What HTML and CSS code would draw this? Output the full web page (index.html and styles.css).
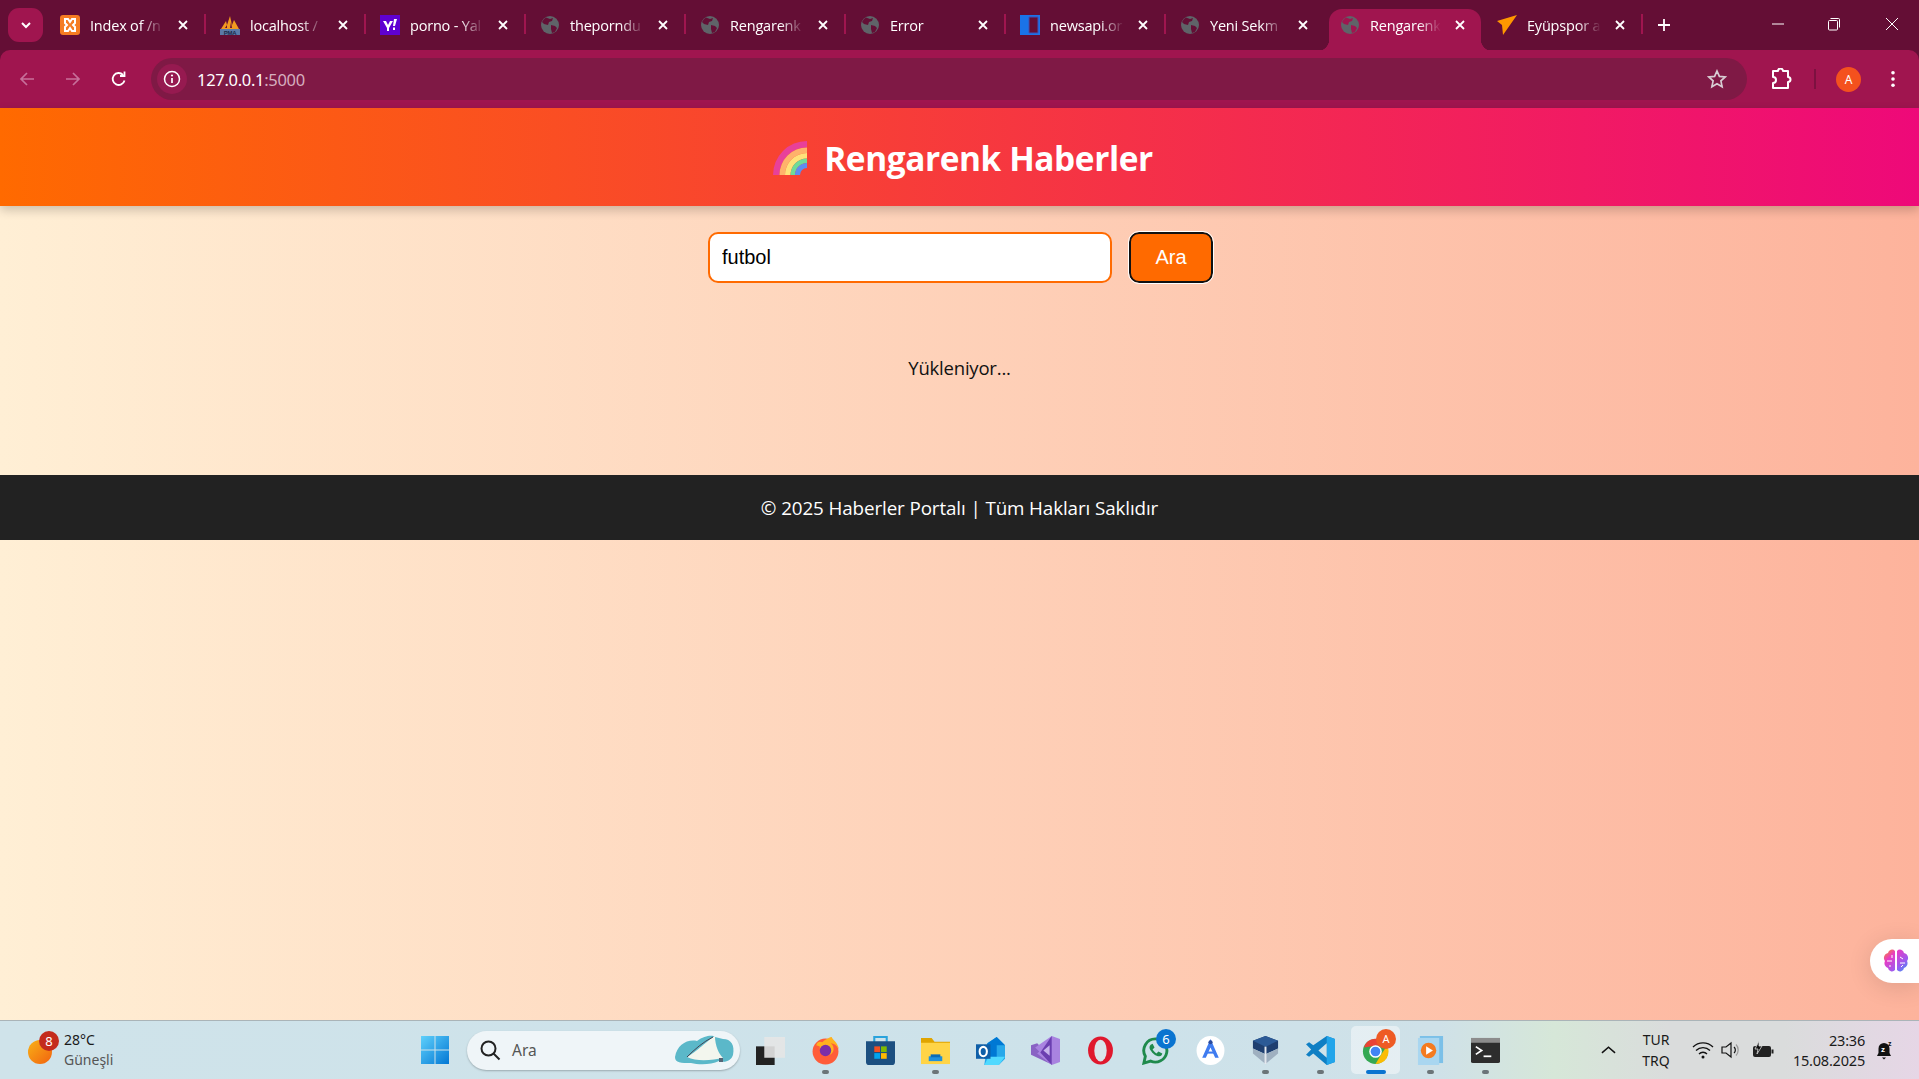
FILE: index.html
```html
<!DOCTYPE html>
<html lang="tr">
<head>
<meta charset="utf-8">
<title>Rengarenk Haberler</title>
<link rel="stylesheet" href="styles.css">
</head>
<body>
<svg class="defs" width="0" height="0" aria-hidden="true">
  <symbol id="globe" viewBox="0 0 20 20">
    <circle cx="10" cy="10" r="9" fill="#5f6368"/>
    <path d="M6 2.5l4 1.5 3-1-1 3-3 1-1 3-4-1-2-2 2-3zM11 10l4 1 2 2-2 4-3 1-1-4z" fill="#640e35"/>
  </symbol>
  <symbol id="close" viewBox="0 0 12 12">
    <path d="M2 2l8 8M10 2l-8 8" stroke="#fff" stroke-width="1.8" fill="none"/>
  </symbol>
</svg>

<header class="tabstrip">
  <button class="tab-menu"><svg width="14" height="14" viewBox="0 0 14 14"><path d="M3 5l4 4 4-4" stroke="#fff" stroke-width="2" fill="none"/></svg></button>
  <div class="tab">
    <svg class="fav" viewBox="0 0 20 20"><rect width="20" height="20" rx="3" fill="#f57c22"/><path d="M5 4h3l2 3 2-3h3v4l-2 2 2 2v4h-3l-2-3-2 3H5v-4l2-2-2-2z" fill="none" stroke="#fff" stroke-width="2"/></svg>
    <span class="tab-title">Index of /n</span>
    <svg class="tab-close"><use href="#close"/></svg>
  </div>
  <i class="tab-sep"></i>
  <div class="tab">
    <svg class="fav" viewBox="0 0 20 20"><path d="M1 14L6 6l1 4 3-9 2 9 2-5 5 9z" fill="#f29a1f"/><path d="M5 13l2-3v3zM10 13l1-6 1 6z" fill="#640e35"/><rect x="0" y="14" width="20" height="6" fill="#5b7aa8"/><text x="10" y="19.5" class="pma">PMA</text></svg>
    <span class="tab-title">localhost /</span>
    <svg class="tab-close"><use href="#close"/></svg>
  </div>
  <i class="tab-sep"></i>
  <div class="tab">
    <svg class="fav" viewBox="0 0 20 20"><rect width="20" height="20" fill="#5f01d1"/><path d="M3 6h3l2 4 2-4h3l-4 7v3H7v-3z" fill="#fff"/><path d="M14 4h3l-2 7h-2zM13 12.5h2V15h-2z" fill="#fff"/></svg>
    <span class="tab-title">porno - Yal</span>
    <svg class="tab-close"><use href="#close"/></svg>
  </div>
  <i class="tab-sep"></i>
  <div class="tab">
    <svg class="fav"><use href="#globe"/></svg>
    <span class="tab-title">theporndu</span>
    <svg class="tab-close"><use href="#close"/></svg>
  </div>
  <i class="tab-sep"></i>
  <div class="tab">
    <svg class="fav"><use href="#globe"/></svg>
    <span class="tab-title">Rengarenk</span>
    <svg class="tab-close"><use href="#close"/></svg>
  </div>
  <i class="tab-sep"></i>
  <div class="tab">
    <svg class="fav"><use href="#globe"/></svg>
    <span class="tab-title tab-title-plain">Error</span>
    <svg class="tab-close"><use href="#close"/></svg>
  </div>
  <i class="tab-sep"></i>
  <div class="tab">
    <svg class="fav" viewBox="0 0 20 20"><rect width="20" height="20" fill="#1a73e8"/><rect x="9" y="2" width="9" height="16" fill="#640e35"/><path d="M9 2h9v16H9z" fill="none" stroke="#3f51b5"/></svg>
    <span class="tab-title">newsapi.or</span>
    <svg class="tab-close"><use href="#close"/></svg>
  </div>
  <i class="tab-sep"></i>
  <div class="tab">
    <svg class="fav"><use href="#globe"/></svg>
    <span class="tab-title">Yeni Sekm</span>
    <svg class="tab-close"><use href="#close"/></svg>
  </div>
  <i class="tab-sep tab-sep-off"></i>
  <div class="tab tab-active">
    <svg class="fav" viewBox="0 0 20 20"><circle cx="10" cy="10" r="9" fill="#5f6368"/><path d="M6 2.5l4 1.5 3-1-1 3-3 1-1 3-4-1-2-2 2-3zM11 10l4 1 2 2-2 4-3 1-1-4z" fill="#a0154f"/></svg>
    <span class="tab-title">Rengarenk</span>
    <svg class="tab-close"><use href="#close"/></svg>
  </div>
  <i class="tab-sep tab-sep-off tab-sep-narrow"></i>
  <div class="tab">
    <svg class="fav" viewBox="0 0 20 20"><path d="M0 6L20 0 6 20 5 10z" fill="#ff9800"/></svg>
    <span class="tab-title">Eyüpspor a</span>
    <svg class="tab-close"><use href="#close"/></svg>
  </div>
  <i class="tab-sep"></i>
  <svg class="new-tab" viewBox="0 0 14 14"><path d="M7 1v12M1 7h12" stroke="#fff" stroke-width="1.8"/></svg>
  <div class="win-controls">
    <svg class="win-btn" viewBox="0 0 14 14"><path d="M1 7h12" stroke="#fff"/></svg>
    <svg class="win-btn" viewBox="0 0 14 14"><path d="M1.5 4.5a1 1 0 0 1 1-1h7a1 1 0 0 1 1 1v7.500a1 1 0 0 1-1 1h-7a1 1 0 0 1-1-1zM3.500 1.500h8a1 1 0 0 1 1 1v8" stroke="#fff" fill="none"/></svg>
    <svg class="win-btn win-btn-close" viewBox="0 0 14 14"><path d="M1 1l12 12M13 1L1 13" stroke="#fff"/></svg>
  </div>
</header>

<nav class="toolbar">
  <svg class="tool-icon" viewBox="0 0 18 18"><path d="M16 9H3M9 3L3 9l6 6" stroke="#c7709a" stroke-width="1.7" fill="none"/></svg>
  <svg class="tool-icon" viewBox="0 0 18 18"><path d="M2 9h13M9 3l6 6-6 6" stroke="#c7709a" stroke-width="1.7" fill="none"/></svg>
  <svg class="tool-icon" viewBox="0 0 18 18"><path d="M14.500 10.500A6 6 0 1 1 13 4.800M14.500 1.500v4.500H10" stroke="#fff" stroke-width="1.800" fill="none"/></svg>
  <div class="omnibox">
    <span class="info-chip"><svg width="18" height="18" viewBox="0 0 18 18"><circle cx="9" cy="9" r="7.500" stroke="#fff" stroke-width="1.500" fill="none"/><path d="M9 8v5" stroke="#fff" stroke-width="1.700"/><circle cx="9" cy="5.500" r="1.100" fill="#fff"/></svg></span>
    <span class="url">127.0.0.1<span class="url-dim">:5000</span></span>
    <svg class="star" viewBox="0 0 20 20"><path d="M10 2l2.400 5.400 5.800.6-4.300 3.900 1.200 5.800L10 14.700l-5.100 3 1.200-5.800L1.800 8l5.800-.6z" stroke="#d8cdd3" stroke-width="1.700" fill="none"/></svg>
  </div>
  <svg class="ext" viewBox="0 0 22 22"><path d="M3 3h5a2.500 2.500 0 0 1 5 0h5v6a2.500 2.500 0 0 1 0 5v6H3v-5a3 3 0 0 0 0-6z" stroke="#fff" stroke-width="2" fill="none" stroke-linejoin="round"/></svg>
  <i class="tool-sep"></i>
  <span class="avatar">A</span>
  <svg class="dots" viewBox="0 0 6 20"><circle cx="3" cy="3" r="2" fill="#fff"/><circle cx="3" cy="10" r="2" fill="#fff"/><circle cx="3" cy="17" r="2" fill="#fff"/></svg>
</nav>

<main class="viewport">
  <div class="site-head">
    <h1 class="site-title"><svg class="rainbow" viewBox="0 0 34 34"><path d="M0 34A34 34 0 0 1 34 0v6.500A27.500 27.500 0 0 0 6.500 34z" fill="#e8409a"/><path d="M6.500 34A27.500 27.500 0 0 1 34 6.500V12A22 22 0 0 0 12 34z" fill="#ffb26b"/><path d="M12 34A22 22 0 0 1 34 12v5.500A16.500 16.500 0 0 0 17.500 34z" fill="#ffe27a"/><path d="M17.500 34A16.500 16.500 0 0 1 34 17.500V22A12 12 0 0 0 22 34z" fill="#6fdc98"/><path d="M22 34A12 12 0 0 1 34 22v5A7 7 0 0 0 27 34z" fill="#5f8df0"/></svg><span>Rengarenk Haberler</span></h1>
  </div>
  <form class="search-row">
    <input class="search-input" type="text" value="futbol">
    <button class="search-btn" type="button">Ara</button>
  </form>
  <p class="loading">Yükleniyor...</p>
  <footer class="site-foot">© 2025 Haberler Portalı | Tüm Hakları Saklıdır</footer>
  <div class="brain-widget">
    <svg width="26" height="24" viewBox="0 0 26 24"><defs><linearGradient id="bg" x1="0" y1="0" x2="1" y2="1"><stop offset="0" stop-color="#f7931e"/><stop offset=".3" stop-color="#e83bc4"/><stop offset=".7" stop-color="#9b5cf0"/><stop offset="1" stop-color="#2f9bf0"/></linearGradient></defs><path d="M12 2a4 4 0 0 0-7 2 5 5 0 0 0-3 8 5 5 0 0 0 3 7 4 4 0 0 0 7 2zM14 2a4 4 0 0 1 7 2 5 5 0 0 1 3 8 5 5 0 0 1-3 7 4 4 0 0 1-7 2z" fill="url(#bg)"/><path d="M4 12h5M9 6v3M8 17h-2M17 8l3 2M17 14h5M18 18l2-2" stroke="#fff" fill="none"/></svg>
  </div>
</main>

<footer class="taskbar">
  <div class="weather">
    <span class="sun"><b class="sun-badge">8</b></span>
    <span class="weather-text"><span>28°C</span><span class="weather-sub">Güneşli</span></span>
  </div>
  <svg class="win-logo" viewBox="0 0 30 30"><defs><linearGradient id="wl" x1="0" y1="0" x2="1" y2="1"><stop offset="0" stop-color="#5fd0fb"/><stop offset="1" stop-color="#0277d4"/></linearGradient></defs><path d="M1 1h13.500v13.500H1zM15.500 1H29v13.500H15.500zM1 15.500h13.500V29H1zM15.500 15.500H29V29H15.500z" fill="url(#wl)"/></svg>
  <div class="task-search">
    <svg width="22" height="22" viewBox="0 0 22 22"><circle cx="9.500" cy="9.500" r="7" stroke="#222" stroke-width="2" fill="none"/><path d="M14.500 14.500l6 6" stroke="#222" stroke-width="2"/></svg>
    <span class="task-search-text">Ara</span>
    <svg class="search-art" viewBox="0 0 62 34"><path d="M2 24C4 12 14 6 24 8 32 2 40 2 42 4l8 2c8 0 12 6 10 16-2 6-8 8-14 6-8 4-20 4-28 2C8 30 2 30 2 24z" fill="#5bb8c9"/><path d="M14 24C22 20 36 6 42 3c0 10 4 18 8 22-10 2-26 4-36-1z" fill="#f3f6ee"/><path d="M14 24C22 16 30 9 40 4" stroke="#445" fill="none"/><path d="M46 25h4v4h-4z" fill="#567"/></svg>
  </div>
  <div class="task-apps">
    <div class="task-app">
      <svg class="app-icon" viewBox="0 0 28 28"><rect x="0" y="10" width="18" height="18" fill="#222"/><rect x="8" y="1" width="20" height="20" fill="#e6e6e6" opacity=".9"/></svg>
    </div>
    <div class="task-app task-on">
      <svg class="app-icon" viewBox="0 0 28 28"><circle cx="14" cy="15" r="12.500" fill="#ff5c39"/><path d="M5 9C6 5 9 5 11 6c3-3 8-5 9-5 0 2 6 5 7 12-2-4-5-6-8-6 3 2 4 7 1 10-3 3-10 2-11-3-1-2 0-4-1-4z" fill="#ffb21e"/><circle cx="14" cy="14" r="5.500" fill="#7b2ea8"/></svg>
    </div>
    <div class="task-app">
      <svg class="app-icon" viewBox="0 0 28 28"><path d="M8 6V1h12v5" stroke="#29a3dc" stroke-width="2" fill="none"/><path d="M0 5h28v20a3 3 0 0 1-3 3H3a3 3 0 0 1-3-3z" fill="#1c4f80"/><path d="M8 10h5.500v5.500H8z" fill="#f25022"/><path d="M14.500 10H20v5.500h-5.500z" fill="#7fba00"/><path d="M8 16.500h5.500V22H8z" fill="#00a4ef"/><path d="M14.500 16.500H20V22h-5.500z" fill="#ffb900"/></svg>
    </div>
    <div class="task-app task-on">
      <svg class="app-icon" viewBox="0 0 30 28"><path d="M0 1h11l3 4h16v23H0z" fill="#e0a400"/><path d="M0 6h30v22H0z" fill="#ffd447"/><path d="M8 20h14v5H8z" fill="#1e90dc"/><path d="M10 18h10v3H10z" fill="#0a6cb8"/></svg>
    </div>
    <div class="task-app">
      <svg class="app-icon" viewBox="0 0 28 28"><path d="M11 7L20 1l8 8v13l-6 6H8z" fill="#28a8ea"/><path d="M11 7L20 1l8 8H20v13H8z" fill="#0078d4"/><path d="M12 20h16l-6 8H8z" fill="#50d9ff"/><rect x="0" y="8" width="14" height="14" fill="#0f5fa8"/><ellipse cx="7" cy="15" rx="3.500" ry="4.500" stroke="#fff" stroke-width="2" fill="none"/></svg>
    </div>
    <div class="task-app">
      <svg class="app-icon" viewBox="0 0 28 28"><path d="M0 9l6-2 14 14-1 6-19-9z" fill="#8a63c4"/><path d="M20 0l8 3v22l-8 3-14-11 4-4 8 7V7L9 16 4 11z" fill="#a983e0"/><path d="M20 0v28L9 16z" fill="#6b3fb0"/><path d="M18 9v10l-6-5z" fill="#c7b3ec"/></svg>
    </div>
    <div class="task-app">
      <svg class="app-icon" viewBox="0 0 28 28"><ellipse cx="14" cy="14" rx="12" ry="13.500" fill="#e0182d"/><ellipse cx="14" cy="14" rx="6" ry="10.500" fill="#d9e4ea"/></svg>
    </div>
    <div class="task-app">
      <svg class="app-icon" viewBox="0 0 30 30"><path d="M15 3a12 12 0 0 0-10.500 18L3 28l7-2A12 12 0 1 0 15 3z" fill="none" stroke="#1f8a4c" stroke-width="3"/><path d="M10 9c-1 1-2 3 0 6s5 6 9 6c2 0 3-2 3-3l-4-2-2 2c-2-1-3-3-4-4l2-2-2-4z" fill="#1f8a4c"/></svg>
      <b class="app-badge">6</b>
    </div>
    <div class="task-app">
      <svg class="app-icon" viewBox="0 0 28 28"><ellipse cx="14" cy="14" rx="13.500" ry="14" fill="#fff"/><path d="M14 3l8 18h-3.500L14 11 9.500 21H6z" fill="#3f7cf0"/><path d="M9 15h10v2H9z" fill="#3f7cf0"/><circle cx="14" cy="6" r="2" fill="#2b4a9c"/></svg>
    </div>
    <div class="task-app task-on">
      <svg class="app-icon" viewBox="0 0 28 30"><path d="M14 0L27 5v8l-13 6L1 13V5z" fill="#1f3f70"/><path d="M14 0L27 5l-13 6L1 5z" fill="#2c5a96"/><path d="M1 13l13 6 13-6v5l-13 11L1 18z" fill="#9fb0c0"/><path d="M14 11v18" stroke="#e4e8ee" stroke-width="2"/></svg>
    </div>
    <div class="task-app task-on">
      <svg class="app-icon" viewBox="0 0 28 28"><path d="M20 0l8 3v22l-8 3-13-11-4 3-3-2 5-5-5-5 3-2 4 3z" fill="#0f7fc4"/><path d="M20 0l8 3v22l-8 3z" fill="#22a5ea"/><path d="M20 7v14l-8-7z" fill="#cfe3ea"/></svg>
    </div>
    <div class="task-app task-active">
      <svg class="app-icon" viewBox="0 0 30 30"><circle cx="15" cy="16" r="13" fill="#34a853"/><path d="M3 12A13 13 0 0 1 27 10H15z" fill="#ea4335"/><path d="M27 10a13 13 0 0 1-12 19l6-10z" fill="#fbbc04"/><circle cx="15" cy="16" r="6.500" fill="#fff"/><circle cx="15" cy="16" r="5" fill="#4285f4"/></svg>
      <b class="app-avatar">A</b>
    </div>
    <div class="task-app task-on">
      <svg class="app-icon" viewBox="0 0 26 30"><rect x="2" y="0" width="24" height="28" fill="#7cc0e8"/><rect x="0" y="2" width="22" height="28" fill="#a9d6f0"/><circle cx="11" cy="15" r="8" fill="#f47b20"/><path d="M8.500 10.500l7 4.500-7 4.500z" fill="#fff"/></svg>
    </div>
    <div class="task-app task-on">
      <svg class="app-icon" viewBox="0 0 30 30"><rect y="2" width="30" height="26" rx="2" fill="#2d2d2d"/><rect y="2" width="30" height="5" fill="#8c8c8c"/><path d="M5 11l6 4-6 4" stroke="#fff" stroke-width="1.800" fill="none"/><path d="M13 21h8" stroke="#fff" stroke-width="1.800"/></svg>
    </div>
  </div>
  <div class="tray">
    <svg class="tray-chev" viewBox="0 0 16 10"><path d="M1 8l7-6 7 6" stroke="#111" stroke-width="1.600" fill="none"/></svg>
    <div class="tray-lang"><span>TUR</span><span>TRQ</span></div>
    <svg class="tray-icon tray-wifi" viewBox="0 0 22 18"><path d="M1 6a14 14 0 0 1 20 0M4 9.500a10 10 0 0 1 14 0M7 13a5.500 5.500 0 0 1 8 0" stroke="#111" stroke-width="1.300" fill="none"/><circle cx="11" cy="16" r="1.500" fill="#111"/></svg>
    <svg class="tray-icon tray-sound" viewBox="0 0 22 18"><path d="M2 6h4l5-4v14l-5-4H2z" stroke="#111" stroke-width="1.200" fill="none"/><path d="M14 6a4 4 0 0 1 0 6" stroke="#111" stroke-width="1.200" fill="none"/><path d="M16 3.500a8 8 0 0 1 0 11" stroke="#999" stroke-width="1.200" fill="none"/></svg>
    <svg class="tray-icon tray-batt" viewBox="0 0 22 18"><rect x="1" y="5" width="18" height="11" rx="2" fill="#222"/><rect x="19.500" y="8.500" width="2" height="4" fill="#222"/><path d="M7 0L3 8h3l-1 5 5-8H7z" fill="#111" stroke="#dadcdc" stroke-width=".8"/></svg>
    <div class="clock"><span>23:36</span><span>15.08.2025</span></div>
    <svg class="tray-bell" viewBox="0 0 18 20"><path d="M8 3a5.500 5.500 0 0 0-5.500 5.500V13L1 16h14l-1.500-3V8.500A5.500 5.500 0 0 0 8 3z" fill="#111"/><path d="M6 17.500h4l-2 2z" fill="#111"/><text x="5" y="12" class="bell-z">z</text><text x="12" y="6" class="bell-z2">z</text></svg>
  </div>
</footer>
</body>
</html>
```

FILE: styles.css
```css
* { box-sizing: border-box; }
html, body { margin: 0; height: 100%; overflow: hidden; }
body {
  width: 1919px;
  height: 1079px;
  display: flex;
  flex-direction: column;
  font-family: "Open Sans", "Noto Sans", sans-serif;
  background: #640e35;
}
.defs { position: absolute; }

/* Tab strip */
.tabstrip {
  height: 50px;
  flex: none;
  display: flex;
  align-items: flex-start;
  padding: 8px 0 0 8px;
  background: #640e35;
  color: #fff;
}
.tab-menu {
  width: 35px;
  height: 34px;
  margin-right: 6px;
  padding: 0;
  border: 0;
  border-radius: 11px;
  background: #a0154f;
  display: flex;
  align-items: center;
  justify-content: center;
}
.tab {
  position: relative;
  width: 152px;
  height: 42px;
  margin-top: 1px;
  padding: 0 11px;
  display: flex;
  align-items: center;
  padding-bottom: 10px;
  font-size: 14.5px;
  letter-spacing: -0.2px;
}
.tab-active {
  padding-right: 14px;
  background: #a0154f;
  border-radius: 13px 13px 0 0;
}
.tab-active::before,
.tab-active::after {
  content: "";
  position: absolute;
  bottom: 0;
  width: 12px;
  height: 12px;
}
.tab-active::before { left: -12px; background: radial-gradient(circle at 0 0, transparent 12px, #a0154f 12.500px); }
.tab-active::after { right: -12px; background: radial-gradient(circle at 100% 0, transparent 12px, #a0154f 12.500px); }
.fav { width: 20px; height: 20px; flex: none; }
.pma { font: bold 6px "Liberation Sans", sans-serif; fill: #1b2a4a; text-anchor: middle; }
.tab-title {
  flex: 1;
  min-width: 0;
  margin: 0 13px 0 10px;
  white-space: nowrap;
  overflow: hidden;
  -webkit-mask-image: linear-gradient(to right, #000 68%, transparent 100%);
  mask-image: linear-gradient(to right, #000 68%, transparent 100%);
}
.tab-close { width: 12px; height: 12px; flex: none; margin-right: 1px; }
.tab-sep {
  flex: none;
  width: 2px;
  height: 20px;
  margin: 6px 3px 0;
  background: #a0154f;
}
.tab-sep-off { background: transparent; }
.tab-sep-narrow { margin: 6px 1.500px 0; }
.new-tab { width: 14px; height: 14px; margin: 10px 0 0 11px; flex: none; }
.win-controls {
  margin-left: auto;
  display: flex;
  gap: 42px;
  padding: 9px 20px 0 0;
}
.win-btn { width: 14px; height: 14px; }
.win-btn-close { margin-left: 2px; }

/* Toolbar */
.toolbar {
  height: 58px;
  flex: none;
  display: flex;
  align-items: center;
  padding: 0 0 0 18px;
  background: #a0154f;
  border-radius: 10px 10px 0 0;
}
.tool-icon { width: 18px; height: 18px; flex: none; margin-right: 28px; }
.tool-icon:nth-child(3) { margin-right: 23px; }
.omnibox {
  width: 1596px;
  height: 42px;
  display: flex;
  align-items: center;
  padding-left: 6px;
  border-radius: 21px;
  background: #7f1945;
  color: #fff;
}
.info-chip {
  width: 30px;
  height: 30px;
  border-radius: 50%;
  background: #961a50;
  display: flex;
  align-items: center;
  justify-content: center;
}
.url { margin-left: 10px; font-size: 16.5px; letter-spacing: -0.3px; font-family: "Noto Sans", sans-serif; }
.url-dim { color: #d6aebf; }
.star { width: 20px; height: 20px; margin-left: auto; margin-right: 20px; }
.ext { width: 22px; height: 22px; margin-left: 23px; flex: none; }
.tool-sep { width: 2px; height: 20px; margin: 0 20px 0 22px; background: #7c1140; flex: none; }
.avatar {
  width: 25px;
  height: 25px;
  flex: none;
  border-radius: 50%;
  background: #f4511e;
  color: #fff;
  font: 12px/25px "Noto Sans", sans-serif;
  text-align: center;
}
.dots { width: 6px; height: 18px; margin-left: 29px; flex: none; }

/* Page */
.viewport {
  position: relative;
  flex: 1;
  min-height: 0;
  background: linear-gradient(90deg, #ffefd5 0%, #fdb39c 100%);
}
.site-head {
  height: 98px;
  padding: 1px 0 0 7px;
  display: flex;
  align-items: center;
  justify-content: center;
  background: linear-gradient(90deg, #ff6a00, #ee0979);
  box-shadow: 0 4px 10px rgba(0, 0, 0, 0.2);
}
.site-title {
  margin: 0;
  display: flex;
  align-items: center;
  gap: 17px;
  color: #fff;
  font-size: 33.400px;
  font-weight: 700;
  letter-spacing: -0.4px;
}
.rainbow { width: 34px; height: 34px; }
.search-row {
  display: flex;
  justify-content: center;
  gap: 17px;
  margin: 26px 0 0;
  padding-left: 2px;
}
.search-input {
  width: 404px;
  height: 51px;
  padding: 0 12px;
  border: 2px solid #ff6a00;
  border-radius: 10px;
  background: #fff;
  color: #000;
  font: 20px "Liberation Sans", Arial, sans-serif;
  outline: none;
}
.search-btn {
  width: 84px;
  height: 51px;
  padding: 0;
  border: 2px solid #111;
  outline: 1px solid #fff;
  border-radius: 10px;
  background: #ff6a00;
  color: #fff;
  font: 20px "Liberation Sans", Arial, sans-serif;
}
.loading {
  margin: 0;
  height: 192px;
  padding-top: 72px;
  text-align: center;
  color: #111;
  font-size: 18.500px;
  letter-spacing: -0.2px;
}
.site-foot {
  height: 65px;
  padding-top: 1px;
  display: flex;
  align-items: center;
  justify-content: center;
  background: #222;
  color: #fff;
  font-size: 18.800px;
  letter-spacing: -0.1px;
}
.brain-widget {
  position: absolute;
  right: 0;
  bottom: 37px;
  width: 49px;
  height: 44px;
  padding-left: 13px;
  display: flex;
  align-items: center;
  border-radius: 22px 0 0 22px;
  background: #fff;
  box-shadow: 0 4px 24px rgba(0, 0, 0, 0.12);
}

/* Taskbar */
.taskbar {
  height: 59px;
  flex: none;
  display: flex;
  align-items: center;
  border-top: 1px solid #aab4b8;
  background: linear-gradient(90deg, #cfe3ea 0%, #cde2ea 60%, #cfe1e8 75%, #d6e7d8 81%, #dadcdc 87%, #dadcdc 93%, #e6d6e6 100%);
  color: #1a1a1a;
  font-family: "Noto Sans", sans-serif;
}
.weather {
  width: 420px;
  flex: none;
  display: flex;
  align-items: center;
  padding-left: 28px;
}
.sun {
  position: relative;
  width: 24px;
  height: 24px;
  margin-top: 4px;
  border-radius: 50%;
  background: linear-gradient(135deg, #f8b217, #f2620f);
}
.sun-badge {
  position: absolute;
  top: -9px;
  right: -7px;
  width: 20px;
  height: 20px;
  border-radius: 50%;
  background: #c42b1c;
  color: #fff;
  font: 400 13px/20px "Noto Sans", sans-serif;
  text-align: center;
}
.weather-text {
  display: flex;
  flex-direction: column;
  margin-left: 12px;
  font-size: 14px;
  line-height: 20px;
}
.weather-sub { color: #555; }
.win-logo { width: 30px; height: 30px; flex: none; }
.task-search {
  width: 273px;
  height: 39px;
  flex: none;
  margin: 0 3px 0 17px;
  padding: 0 5px 0 12px;
  display: flex;
  align-items: center;
  border-radius: 20px;
  background: #eff5f8;
  box-shadow: 0 1px 2px rgba(0, 0, 0, 0.25);
}
.task-search-text { margin-left: 11px; color: #555; font-size: 15.500px; }
.search-art { width: 62px; height: 34px; margin-left: auto; }
.task-apps { display: flex; flex: none; }
.task-app {
  position: relative;
  width: 55px;
  height: 48px;
  display: flex;
  align-items: center;
  justify-content: center;
}
.app-icon { width: 29px; height: 29px; }
.task-on::after,
.task-active::after {
  content: "";
  position: absolute;
  left: 50%;
  bottom: 0;
  width: 7px;
  height: 4px;
  margin-left: -3.500px;
  border-radius: 2px;
  background: #6b7478;
}
.task-active::before {
  content: "";
  position: absolute;
  inset: 0 3px;
  border-radius: 5px;
  background: rgba(255, 255, 255, 0.45);
}
.task-active .app-icon { position: relative; }
.task-active::after { width: 20px; margin-left: -10px; background: #0a74d0; }
.app-badge {
  position: absolute;
  top: 3px;
  right: 7px;
  width: 20px;
  height: 20px;
  border-radius: 50%;
  background: #0a74d0;
  color: #fff;
  font: 400 13px/20px "Noto Sans", sans-serif;
  text-align: center;
}
.app-avatar {
  position: absolute;
  top: 3px;
  right: 7px;
  width: 20px;
  height: 20px;
  border-radius: 50%;
  background: #ee5a24;
  color: #fff;
  font: 400 11px/20px "Noto Sans", sans-serif;
  text-align: center;
}
.tray { display: flex; align-items: center; flex: 1; min-width: 0; padding-left: 88px; }
.tray-chev { width: 15px; height: 10px; flex: none; }
.tray-lang {
  width: 40px;
  margin-left: 20px;
  display: flex;
  flex-direction: column;
  align-items: center;
  font-size: 14px;
  line-height: 21px;
}
.tray-icon { width: 22px; height: 18px; flex: none; }
.tray-wifi { margin-left: 16px; }
.tray-sound { margin-left: 6px; }
.tray-batt { margin-left: 10px; }
.clock {
  margin-left: 16px;
  width: 75px;
  display: flex;
  flex-direction: column;
  align-items: flex-end;
  font-size: 14.500px;
  line-height: 20px;
  letter-spacing: -0.2px;
  white-space: nowrap;
}
.tray-bell { width: 18px; height: 20px; margin-left: 11px; flex: none; }
.bell-z { font: bold 8px "Liberation Sans", sans-serif; fill: #fff; }
.bell-z2 { font: bold 7px "Liberation Sans", sans-serif; fill: #111; }
```
